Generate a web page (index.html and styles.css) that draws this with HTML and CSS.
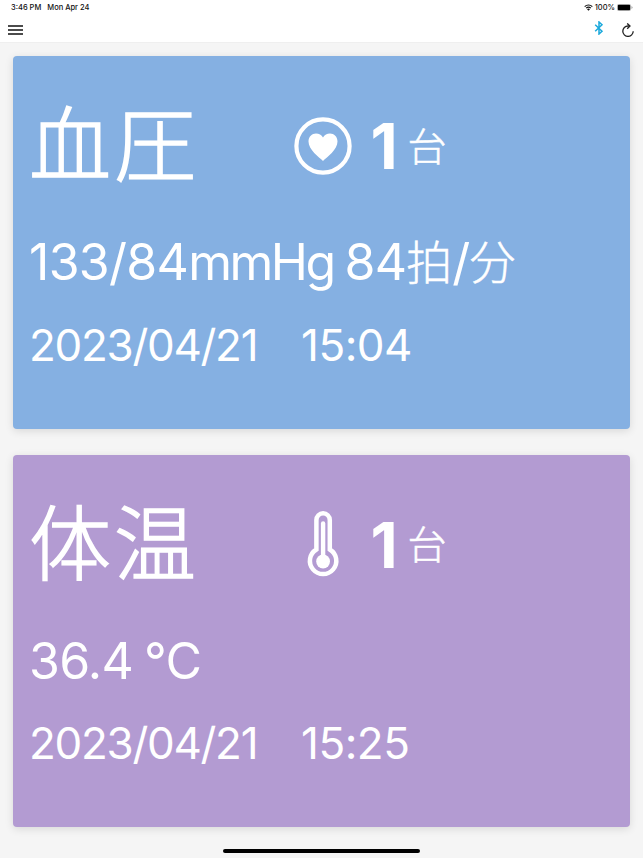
FILE: index.html
```html
<!DOCTYPE html>
<html lang="ja">
<head>
  <meta charset="UTF-8">
  <meta name="viewport" content="width=device-width, initial-scale=1.0">
  <title>測定データ</title>
  <link rel="stylesheet" href="styles.css">
</head>
<body>

  <!-- Header -->
  <header>
    <div class="status-bar">
      <span class="clock">3:46 PM</span>
      <span class="today">Mon Apr 24</span>
      <svg class="wifi" viewBox="0 0 20 15">
        <path d="M1.5 5.5a12 12 0 0 1 17 0M4.8 9a7.4 7.4 0 0 1 10.4 0" fill="none" stroke="#111" stroke-width="2.6"/>
        <path d="M6.8 11.2a4.6 4.6 0 0 1 6.4 0L10 14.6z" fill="#111"/>
      </svg>
      <span class="percent">100%</span>
      <svg class="battery" viewBox="0 0 16 7">
        <rect x=".25" y=".25" width="13.5" height="6.5" rx="1.8" fill="none" stroke="#888" stroke-width=".5"/>
        <rect x=".8" y=".8" width="12.4" height="5.4" rx="1.3" fill="#000"/>
        <path d="M14.6 2.3v2.4q.9-.4.9-1.2t-.9-1.2z" fill="#888"/>
      </svg>
    </div>
    <div class="toolbar">
      <svg class="menu" viewBox="0 0 15 10">
        <path d="M0 1h15M0 5h15M0 9h15" stroke="#111" stroke-width="1.3"/>
      </svg>
      <svg class="bluetooth" viewBox="0 0 10 14">
        <path d="M1.2 3.8L8 10.2 5 13V1l3 2.8-6.8 6.4" fill="none" stroke="#1ba9dc" stroke-width="1.5"/>
      </svg>
      <svg class="reload" viewBox="0 0 12 14">
        <path d="M7.5 3H6A5.2 5.2 0 1 0 11.200 8.200" fill="none" stroke="#222" stroke-width="1.300"/>
        <path d="M5.200.4l2.800 2.600-2.800 2.800" fill="none" stroke="#222" stroke-width="1.300"/>
      </svg>
    </div>
  </header>

  <main>
    <!-- Blood pressure -->
    <div class="card pressure">
      <div class="card-title">
        <h2>血圧</h2>
        <svg class="icon" viewBox="0 0 60 70">
          <circle cx="30" cy="35" r="26.6" fill="none" stroke="#fff" stroke-width="4.2"/>
          <path d="M30 50C26 46 15.5 39 15.5 30.5C15.5 25.5 19 22.5 23 22.5C26 22.5 28.5 24 30 26.5C31.5 24 34 22.5 37 22.5C41 22.5 44.5 25.5 44.5 30.5C44.5 39 34 46 30 50z" fill="#fff"/>
        </svg>
        <span class="count">1</span>
        <span class="unit">台</span>
      </div>
      <p class="reading">133/84<span class="mmhg">mmHg</span> 84<span class="kanji">拍</span>/<span class="kanji">分</span></p>
      <p class="date"><span class="day">2023/04/21</span><span class="time">15:04</span></p>
    </div>

    <!-- Body temperature -->
    <div class="card temperature">
      <div class="card-title">
        <h2>体温</h2>
        <svg class="icon" viewBox="0 0 60 70">
          <path d="M23.4 39.5V10a6.7 6.7 0 0 1 13.4 0V39.5a13.2 13.2 0 1 1-13.4 0z" fill="none" stroke="#fff" stroke-width="4.5"/>
          <path d="M30.1 13.5v37" stroke="#fff" stroke-width="4.4" stroke-linecap="round"/>
          <circle cx="30.1" cy="51.5" r="6.9" fill="#fff"/>
        </svg>
        <span class="count">1</span>
        <span class="unit">台</span>
      </div>
      <p class="reading">36.4 °C</p>
      <p class="date"><span class="day">2023/04/21</span><span class="time">15:25</span></p>
    </div>
  </main>

  <div class="home-bar"></div>

</body>
</html>
```

FILE: styles.css
```css
/* Basic styling */
body {
  font-family: Inter, "Noto Sans CJK JP", sans-serif;
  margin: 0;
  height: 858px;
  overflow: hidden;
  background-color: #f5f5f5;
  display: flex;
  flex-direction: column;
}

svg {
  display: block;
  flex: none;
}

/* Header */
header {
  height: 42px;
  background-color: #fff;
  box-shadow: 0 0 1px rgba(0, 0, 0, 0.15);
}

.status-bar {
  display: flex;
  align-items: center;
  height: 15px;
  padding: 0 10px 0 11px;
  font-size: 7.5px;
  font-weight: 500;
  color: #111;
}

.today {
  margin-left: 6px;
}

.wifi {
  width: 9px;
  height: 7px;
  margin: 0 2px 0 auto;
}

.battery {
  width: 16px;
  height: 7px;
  margin-left: 2px;
}

.toolbar {
  display: flex;
  align-items: center;
  height: 29px;
  padding: 0 9px 0 8px;
}

.menu {
  width: 15px;
  height: 10px;
}

.bluetooth {
  width: 10px;
  height: 14px;
  margin: -3px 18px 0 auto;
}

.reload {
  width: 12px;
  height: 14px;
}

/* Cards */
main {
  display: flex;
  flex-direction: column;
  gap: 26px;
  padding: 14px 13px 0;
}

.card {
  height: 372.5px;
  box-sizing: border-box;
  padding: 32px 16px 0;
  border-radius: 4px;
  color: #fff;
  box-shadow: 0 2px 8px rgba(0, 0, 0, 0.12);
}

.pressure {
  background-color: #85b0e2;
}

.temperature {
  background-color: #b39bd2;
}

.card-title {
  display: flex;
  align-items: center;
  height: 116px;
}

.card-title h2 {
  width: 264px;
  margin: 0;
  font-size: 82px;
  font-weight: 300;
  line-height: 116px;
  letter-spacing: 3px;
  -webkit-text-stroke: 1.5px #fff;
}

.icon {
  width: 60px;
  height: 70px;
}

.count {
  width: 37px;
  margin-left: 17.5px;
  font-size: 63px;
  font-weight: 700;
}

.unit {
  padding-bottom: 5px;
  font-size: 39px;
  font-weight: 300;
  -webkit-text-stroke: 0.5px #fff;
}

.reading,
.date {
  margin: 0;
  line-height: 60px;
  white-space: nowrap;
}

.reading {
  height: 60px;
  margin-top: 28px;
  font-size: 50px;
  letter-spacing: -0.7px;
  word-spacing: -2.5px;
}

.mmhg {
  letter-spacing: -2.5px;
}

.kanji {
  font-size: 46px;
  font-weight: 300;
  letter-spacing: 0;
  line-height: 1;
  vertical-align: 1px;
  -webkit-text-stroke: 0.5px #fff;
}

.date {
  display: flex;
  margin-top: 22.5px;
  font-size: 44px;
}

.day {
  width: 272px;
  letter-spacing: -1.3px;
}

.time {
  letter-spacing: -0.5px;
}

/* Home indicator */
.home-bar {
  width: 197px;
  height: 4px;
  margin: auto auto 5px;
  border-radius: 2px;
  background-color: #000;
}
```
